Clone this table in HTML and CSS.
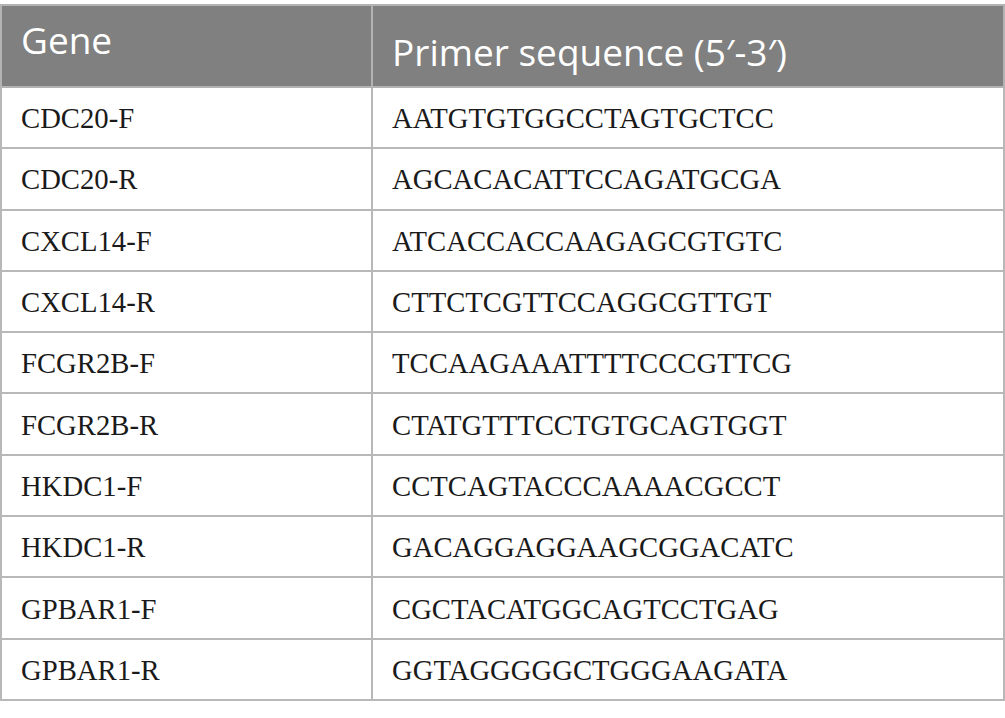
FILE: index.html
```html
<!DOCTYPE html>
<html>
<head>
<meta charset="utf-8">
<link rel="stylesheet" href="styles.css">
</head>
<body>
<table class="primers">
  <thead>
    <tr class="head-row">
      <th class="col-gene">Gene</th>
      <th class="col-seq">Primer sequence (5′-3′)</th>
    </tr>
  </thead>
  <tbody>
    <tr><td>CDC20-F</td><td>AATGTGTGGCCTAGTGCTCC</td></tr>
    <tr><td>CDC20-R</td><td>AGCACACATTCCAGATGCGA</td></tr>
    <tr><td>CXCL14-F</td><td>ATCACCACCAAGAGCGTGTC</td></tr>
    <tr><td>CXCL14-R</td><td>CTTCTCGTTCCAGGCGTTGT</td></tr>
    <tr><td>FCGR2B-F</td><td>TCCAAGAAATTTTCCCGTTCG</td></tr>
    <tr><td>FCGR2B-R</td><td>CTATGTTTCCTGTGCAGTGGT</td></tr>
    <tr><td>HKDC1-F</td><td>CCTCAGTACCCAAAACGCCT</td></tr>
    <tr><td>HKDC1-R</td><td>GACAGGAGGAAGCGGACATC</td></tr>
    <tr><td>GPBAR1-F</td><td>CGCTACATGGCAGTCCTGAG</td></tr>
    <tr><td>GPBAR1-R</td><td>GGTAGGGGGCTGGGAAGATA</td></tr>
  </tbody>
</table>
</body>
</html>
```

FILE: styles.css
```css
html, body {
  margin: 0;
  padding: 0;
  background: #ffffff;
}

body {
  padding-top: 4px;
}

.primers {
  width: 1005px;
  border-collapse: collapse;
  table-layout: fixed;
}

.primers th,
.primers td {
  border: 2px solid #b8b8b8;
  padding: 0 0 0 20px;
  text-align: left;
  vertical-align: middle;
}

.col-gene {
  width: 371px;
}

.head-row th {
  height: 82px;
  background: #7f807f;
  color: #ffffff;
  font-family: "Open Sans", "Noto Sans", sans-serif;
  font-weight: 400;
  font-size: 37px;
  line-height: 50px;
  vertical-align: top;
  box-sizing: border-box;
  border-color: #b3b3b3;
}

.head-row .col-gene {
  padding-top: 9px;
  padding-left: 19px;
}

.head-row .col-seq {
  padding-top: 21px;
  padding-left: 19px;
}

.primers td {
  height: 61.3px;
  font-family: "Liberation Serif", "Times New Roman", serif;
  font-size: 28.7px;
  color: #1a1a1a;
  padding-top: 2px;
  padding-left: 19px;
  box-sizing: border-box;
}
```
